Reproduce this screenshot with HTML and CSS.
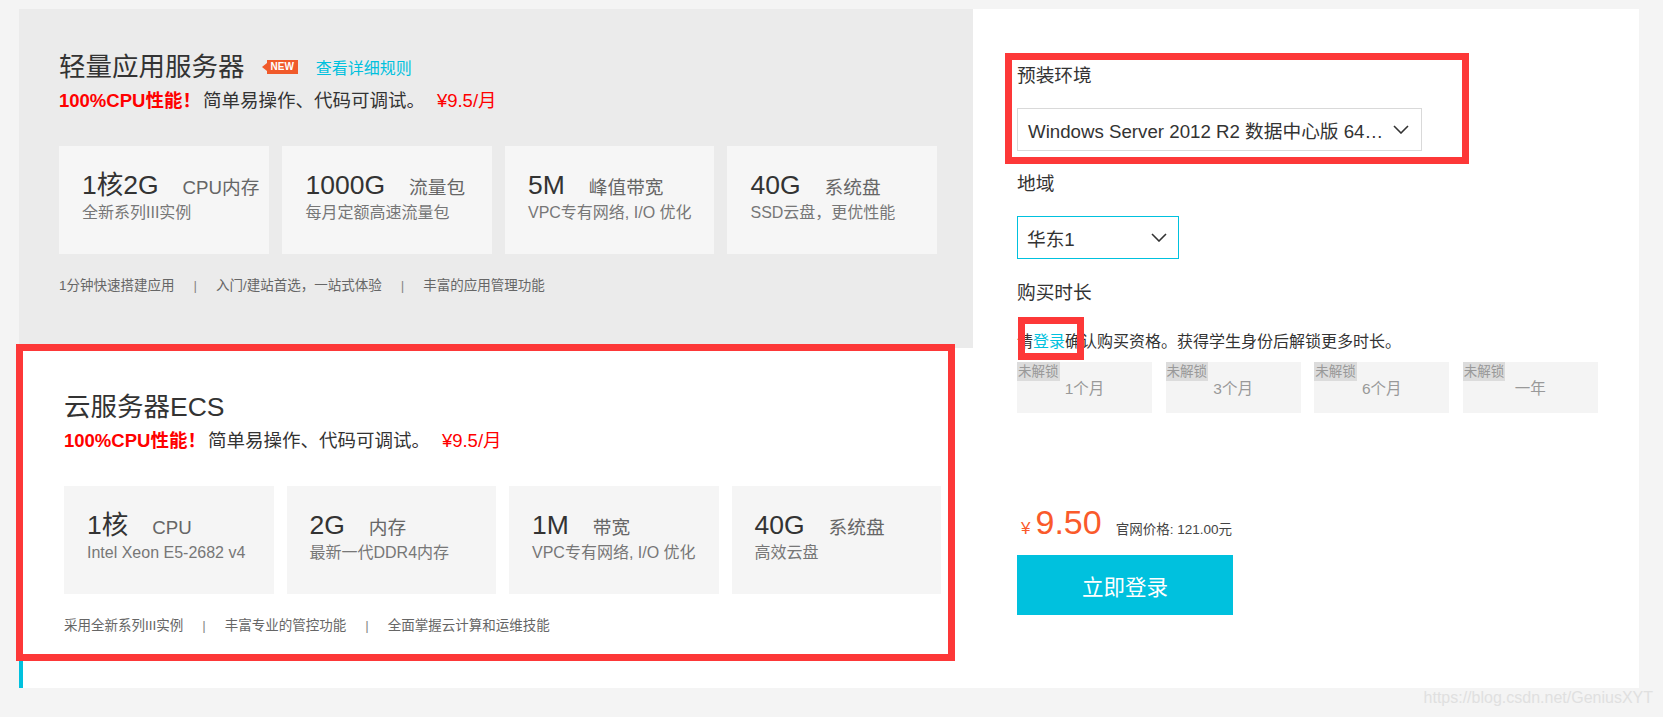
FILE: index.html
```html
<!DOCTYPE html>
<html lang="zh-CN">
<head>
<meta charset="utf-8">
<title>学生优惠</title>
<link rel="stylesheet" href="styles.css">
</head>
<body>
<div class="page">
  <div class="main">
    <div class="left">
      <section class="product product-lite">
        <div class="p-title">
          <span class="p-name">轻量应用服务器</span>
          <span class="badge-new">NEW</span>
          <a class="p-link">查看详细规则</a>
        </div>
        <div class="p-slogan"><b class="hl">100%CPU性能！</b>简单易操作、代码可调试。<span class="price-red">¥9.5/月</span></div>
        <div class="specs">
          <div class="spec">
            <div class="spec-main"><span class="spec-val">1核2G</span><span class="spec-unit">CPU内存</span></div>
            <div class="spec-desc">全新系列III实例</div>
          </div>
          <div class="spec">
            <div class="spec-main"><span class="spec-val">1000G</span><span class="spec-unit">流量包</span></div>
            <div class="spec-desc">每月定额高速流量包</div>
          </div>
          <div class="spec">
            <div class="spec-main"><span class="spec-val">5M</span><span class="spec-unit">峰值带宽</span></div>
            <div class="spec-desc">VPC专有网络, I/O 优化</div>
          </div>
          <div class="spec">
            <div class="spec-main"><span class="spec-val">40G</span><span class="spec-unit">系统盘</span></div>
            <div class="spec-desc">SSD云盘，更优性能</div>
          </div>
        </div>
        <div class="feats"><span>1分钟快速搭建应用</span><span class="sep">|</span><span>入门/建站首选，一站式体验</span><span class="sep">|</span><span>丰富的应用管理功能</span></div>
      </section>
      <section class="product product-ecs">
        <div class="p-title">
          <span class="p-name">云服务器ECS</span>
        </div>
        <div class="p-slogan"><b class="hl">100%CPU性能！</b>简单易操作、代码可调试。<span class="price-red">¥9.5/月</span></div>
        <div class="specs">
          <div class="spec">
            <div class="spec-main"><span class="spec-val">1核</span><span class="spec-unit">CPU</span></div>
            <div class="spec-desc">Intel Xeon E5-2682 v4</div>
          </div>
          <div class="spec">
            <div class="spec-main"><span class="spec-val">2G</span><span class="spec-unit">内存</span></div>
            <div class="spec-desc">最新一代DDR4内存</div>
          </div>
          <div class="spec">
            <div class="spec-main"><span class="spec-val">1M</span><span class="spec-unit">带宽</span></div>
            <div class="spec-desc">VPC专有网络, I/O 优化</div>
          </div>
          <div class="spec">
            <div class="spec-main"><span class="spec-val">40G</span><span class="spec-unit">系统盘</span></div>
            <div class="spec-desc">高效云盘</div>
          </div>
        </div>
        <div class="feats"><span>采用全新系列III实例</span><span class="sep">|</span><span>丰富专业的管控功能</span><span class="sep">|</span><span>全面掌握云计算和运维技能</span></div>
      </section>
    </div>
    <div class="right">
      <div class="field-label">预装环境</div>
      <div class="select select-os">
        <span class="select-text">Windows Server 2012 R2 数据中心版 64…</span>
        <svg class="chev" width="16" height="9" viewBox="0 0 16 9"><polyline points="1,1 8,8 15,1" fill="none" stroke="#333" stroke-width="1.6"/></svg>
      </div>
      <div class="field-label gap-label">地域</div>
      <div class="select select-region">
        <span class="select-text">华东1</span>
        <svg class="chev" width="16" height="9" viewBox="0 0 16 9"><polyline points="1,1 8,8 15,1" fill="none" stroke="#333" stroke-width="1.6"/></svg>
      </div>
      <div class="field-label gap-label2">购买时长</div>
      <div class="login-tip">请<a class="login-link">登录</a>确认购买资格。获得学生身份后解锁更多时长。</div>
      <div class="durations">
        <div class="dur"><span class="lock">未解锁</span><span class="dur-label">1个月</span></div>
        <div class="dur"><span class="lock">未解锁</span><span class="dur-label">3个月</span></div>
        <div class="dur"><span class="lock">未解锁</span><span class="dur-label">6个月</span></div>
        <div class="dur"><span class="lock">未解锁</span><span class="dur-label">一年</span></div>
      </div>
      <div class="price-row"><span class="yen">¥</span><span class="price-num">9.50</span><span class="orig">官网价格: 121.00元</span></div>
      <div class="buy-btn">立即登录</div>
    </div>
  </div>
  <div class="watermark">https://blog.csdn.net/GeniusXYT</div>
  <div class="mark mark-ecs"></div>
  <div class="mark mark-os"></div>
  <div class="mark mark-login"></div>
</div>
</body>
</html>
```

FILE: styles.css
```css
html, body {
  margin: 0;
  padding: 0;
}
body {
  background: #f4f4f4;
  font-family: "Liberation Sans", "Noto Sans CJK SC", sans-serif;
  color: #333;
}
.page {
  position: relative;
  width: 1663px;
  height: 717px;
  box-sizing: border-box;
  padding: 9px 0 0 19px;
  overflow: hidden;
}
.main {
  display: flex;
  width: 1620px;
  height: 679px;
  background: #fff;
}
.left {
  width: 954px;
  display: flex;
  flex-direction: column;
}
.product {
  box-sizing: border-box;
  height: 339px;
  padding: 40px 36px 0 40px;
}
.product-lite {
  background: #ebebeb;
}
.product-ecs {
  height: 340px;
  background: #fff;
  border-left: 4px solid #00c1de;
  padding: 41px 32px 0 41px;
}
.p-title {
  display: flex;
  align-items: center;
  height: 36px;
}
.p-name {
  font-size: 26.5px;
  line-height: 36px;
  color: #333;
}
.badge-new {
  position: relative;
  margin-left: 22px;
  height: 14px;
  line-height: 14px;
  padding: 0 4px;
  background: #f05a2a;
  color: #fff;
  font-size: 10px;
  font-weight: bold;
}
.badge-new::before {
  content: "";
  position: absolute;
  left: -5px;
  top: 3px;
  border-top: 4px solid transparent;
  border-bottom: 4px solid transparent;
  border-right: 5px solid #f05a2a;
}
.p-link {
  margin-left: 18px;
  font-size: 16px;
  color: #00c1de;
}
.p-slogan {
  margin-top: 2px;
  font-size: 18.5px;
  line-height: 28px;
  color: #333;
  white-space: nowrap;
}
.hl {
  color: #f00;
  font-weight: bold;
  margin-right: 2px;
}
.price-red {
  color: #f00;
  margin-left: 12px;
}
.specs {
  margin-top: 31px;
  display: grid;
  grid-template-columns: repeat(4, 1fr);
  column-gap: 13px;
}
.spec {
  background: #f6f6f6;
  height: 108px;
  box-sizing: border-box;
  padding: 24px 10px 0 23px;
  white-space: nowrap;
}
.product-ecs .spec {
  background: #f5f5f5;
}
.spec-main {
  height: 32px;
  line-height: 30px;
}
.spec-val {
  font-size: 26.5px;
  color: #333;
}
.spec-unit {
  margin-left: 24px;
  font-size: 18.7px;
  color: #666;
}
.spec-desc {
  font-size: 16px;
  line-height: 22px;
  color: #777;
}
.feats {
  margin-top: 22px;
  font-size: 13.5px;
  line-height: 20px;
  color: #666;
  white-space: nowrap;
}
.sep {
  margin: 0 19px;
  color: #888;
}
.right {
  flex: 1;
  padding: 53px 0 0 44px;
}
.field-label {
  font-size: 18.7px;
  line-height: 28px;
  color: #333;
}
.gap-label {
  margin-top: 19px;
}
.gap-label2 {
  margin-top: 20px;
}
.select {
  margin-top: 18px;
  box-sizing: border-box;
  height: 43px;
  display: flex;
  align-items: center;
  justify-content: space-between;
  font-size: 18.7px;
  color: #333;
  white-space: nowrap;
}
.select-os {
  width: 405px;
  border: 1px solid #d9d9d9;
  padding: 0 12px 0 10px;
}
.select-region {
  width: 162px;
  border: 1px solid #00c1de;
  padding: 0 11px 0 9px;
}
.chev {
  display: block;
}
.login-tip {
  margin-top: 23px;
  font-size: 16px;
  line-height: 24px;
  color: #333;
  white-space: nowrap;
}
.login-link {
  color: #00c1de;
}
.durations {
  margin-top: 8px;
  display: flex;
  gap: 13.6px;
}
.dur {
  position: relative;
  width: 135px;
  height: 51px;
  background: #f4f4f4;
  display: flex;
  align-items: center;
  justify-content: center;
}
.lock {
  position: absolute;
  left: 0;
  top: 0;
  height: 19px;
  line-height: 19px;
  padding: 0 1px;
  background: #dcdcdc;
  color: #999;
  font-size: 13.5px;
}
.dur-label {
  font-size: 15.5px;
  color: #999;
  margin-top: -1px;
}
.price-row {
  margin-top: 89px;
  height: 40px;
  line-height: 40px;
  white-space: nowrap;
}
.yen {
  font-size: 17px;
  color: #fa5a2b;
  margin-left: 4px;
  margin-right: 5px;
}
.price-num {
  font-size: 34px;
  color: #fa5a2b;
}
.orig {
  margin-left: 14px;
  font-size: 13.5px;
  color: #444;
}
.buy-btn {
  margin-top: 13px;
  width: 216px;
  height: 60px;
  background: #00c1de;
  color: #fff;
  font-size: 21.5px;
  display: flex;
  align-items: center;
  justify-content: center;
}
.watermark {
  text-align: right;
  padding-right: 10px;
  font-size: 16px;
  line-height: 20px;
  color: #e0e0e0;
}
.mark {
  position: absolute;
  box-sizing: border-box;
  border: 7px solid #fd3838;
  pointer-events: none;
}
.mark-ecs {
  left: 16px;
  top: 344px;
  width: 939px;
  height: 317px;
}
.mark-os {
  left: 1005px;
  top: 53px;
  width: 464px;
  height: 111px;
}
.mark-login {
  left: 1018px;
  top: 317px;
  width: 66px;
  height: 43px;
}
```
